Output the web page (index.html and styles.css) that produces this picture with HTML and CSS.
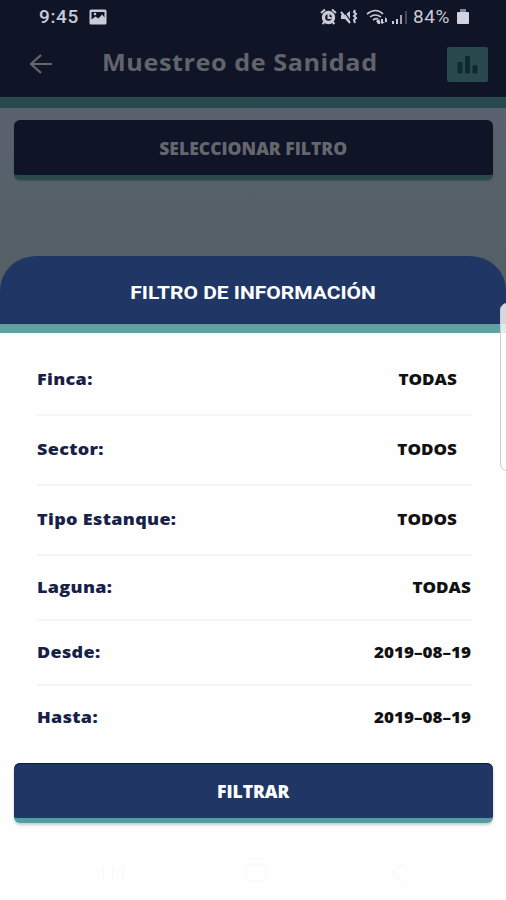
FILE: index.html
```html
<!DOCTYPE html>
<html lang="es">
<head>
<meta charset="utf-8">
<title>Muestreo de Sanidad</title>
<link rel="stylesheet" href="styles.css">
</head>
<body>
<div class="screen">
  <header class="top">
    <div class="status">
      <span class="clock">9:45</span>
      <svg class="picture" width="18" height="16" viewBox="0 0 18 16"><path fill="#c9cbd6" fill-rule="evenodd" d="M2 .5h14q1.500 0 1.500 1.500v12q0 1.500-1.500 1.500H2Q.5 15.500.5 14V2Q.5.5 2 .5zM2.500 3v7.500l4-3 3 2 3.500-4 2.500 3V3z"/><circle cx="6" cy="5" r="1.300" fill="#c9cbd6"/></svg>
      <div class="signals">
        <svg width="88" height="18" viewBox="0 0 88 18" fill="none" stroke="#c9cbd6">
          <circle cx="8.500" cy="9.500" r="5" stroke-width="3.400"/><path stroke-width="2" d="M8.500 6v4h3M1 5l4-3.500M16 5l-4-3.500M2.500 16l2-2M14.500 16l-2-2"/>
          <path fill="#c9cbd6" stroke="none" d="M21 7h4l5-4v12l-5-4h-4z"/><path stroke="#101427" stroke-width="1.300" d="M23 2l9 13"/><path stroke-width="2" d="M21 4l9 11M35 2l-1 2 2 2-2 2 2 2-2 2 1 3"/>
          <path stroke-width="1.600" d="M47 6q9-7 16 0M50 9q5-4 11 0M53 12q3-2 5-1"/><path fill="#c9cbd6" stroke="none" d="M56 13l3-2 1 2v3h-2zM61 11h2v3h2l-3 2-2-2h1zM65 9l2 2v3h-2z"/>
          <path stroke-width="2" d="M73 13v3M77 11v5"/><path stroke="#a1a4b0" stroke-width="2" d="M81 7v9"/><path stroke="#454a5d" stroke-width="2" d="M86 3v13"/>
        </svg>
        <span class="percent">84%</span>
        <svg width="12" height="15" viewBox="0 0 12 15"><path fill="#81858f" d="M3 0h6v4H3z"/><path fill="#d2d3de" d="M1 3h10q1 0 1 1v10q0 1-1 1H1q-1 0-1-1V4q0-1 1-1z"/></svg>
      </div>
    </div>
    <div class="appbar">
      <svg class="back" width="23" height="20" viewBox="0 0 23 20"><path fill="none" stroke="#65676f" stroke-width="2.200" d="M12 1L2 10l10 9M2 10h21"/></svg>
      <h1 class="title">Muestreo de Sanidad</h1>
      <div class="chart"><svg width="21" height="19" viewBox="0 0 21 19"><path fill="#10292f" d="M1.500 7h3l1 1v9.500l-1 1h-3l-1-1V8zM9 1h3l1 1v15.500l-1 1H9l-1-1V2zM16.500 10h3l1 1v6.500l-1 1h-3l-1-1V11z"/></svg></div>
    </div>
  </header>
  <div class="button dim"><span>SELECCIONAR FILTRO</span></div>
  <main class="sheet">
    <h2 class="sheet-head"><span>FILTRO DE INFORMACIÓN</span></h2>
    <div class="rows">
      <div class="row picker"><span class="label">Finca:</span><span class="value">TODAS</span></div>
      <div class="row picker"><span class="label">Sector:</span><span class="value">TODOS</span></div>
      <div class="row picker"><span class="label">Tipo Estanque:</span><span class="value">TODOS</span></div>
      <div class="row"><span class="label">Laguna:</span><span class="value">TODAS</span></div>
      <div class="row"><span class="label">Desde:</span><span class="value">2019–08–19</span></div>
      <div class="row"><span class="label">Hasta:</span><span class="value">2019–08–19</span></div>
    </div>
    <div class="button"><span>FILTRAR</span></div>
    <nav class="nav">
      <svg width="506" height="30" viewBox="0 0 506 30" fill="none" stroke="#fafafa" stroke-width="2"><path d="M103 9v14M113 9v14M123 9v14"/><rect x="246" y="7" width="20" height="17" rx="5"/><path d="M402 8l-10 8 10 8"/></svg>
    </nav>
  </main>
  <div class="edge"></div>
</div>
</body>
</html>
```
FILE: styles.css
```css
* { box-sizing: border-box; }
body { margin: 0; }
.screen {
  position: relative;
  width: 506px;
  height: 900px;
  overflow: hidden;
  display: flex;
  flex-direction: column;
  background: linear-gradient(#5b6170 108px, #56616a 180px, #555f66 256px);
  font-family: "Open Sans", sans-serif;
  font-weight: 800;
  white-space: nowrap;
}
.top { height: 108px; flex: none; background: #101427; border-bottom: 11px solid #28494d; }
.status { height: 33px; display: flex; align-items: center; padding: 0 37px 0 39px; color: #c9cbd6; }
.clock, .percent { font: 500 19px/32px Roboto, sans-serif; letter-spacing: .6px; }
.clock { width: 50px; }
.percent { font-weight: 400; letter-spacing: .6px; }
.signals { margin-left: auto; display: flex; align-items: center; gap: 5px; }
.signals .percent { width: 39px; }
.appbar { height: 62px; display: flex; align-items: center; padding: 0 18px 0 29px; }
.title { margin: -2px 0 0 50px; font-size: 22.5px; line-height: 32px; font-weight: 700; letter-spacing: .5px; color: #62646c; transform: scaleX(1.12); transform-origin: left; }
.chart { width: 41px; height: 35px; margin-left: auto; border-radius: 2px; background: #28494d; display: flex; align-items: center; justify-content: center; }
.button {
  height: 60px;
  flex: none;
  margin: 0 13px 0 14px;
  padding-top: 2px;
  display: flex;
  align-items: center;
  justify-content: center;
  border-radius: 6px;
  background: #203765;
  border-bottom: 5px solid #559ba0;
  box-shadow: 0 2px 3px #0003, inset 0 1px 1px #0b1d4a;
  color: #fff;
  font-size: 17px;
}
.button span { transform: scaleX(1.03); }
.button.dim { margin-top: 12px; background: #101427; border-color: #28494d; color: #65676f; box-shadow: 0 1px 2px #0003; }
.sheet { margin-top: 76px; flex: 1; display: flex; flex-direction: column; background: linear-gradient(transparent 60px, #fefefe 60px); }
.sheet-head {
  margin: 0;
  height: 77px;
  flex: none;
  display: flex;
  align-items: center;
  justify-content: center;
  padding-top: 5px;
  border-radius: 36px 36px 0 0 / 34px 34px 0 0;
  background: linear-gradient(#203765 67px, #162d58 68px, #60a2a2 68px);
  color: #fff;
  font: 700 19px/24px Roboto, sans-serif;
}
.sheet-head span { margin-top: -9px; transform: scaleX(1.105); }
.rows { height: 430px; flex: none; padding: 13px 34px 0 37px; }
.row { height: 65px; padding-bottom: 1px; display: flex; align-items: center; justify-content: space-between; border-bottom: 2px solid #f5f5f5; font-size: 17px; line-height: 24px; }
.row:last-child { border: 0; height: 63px; }
.picker { height: 70px; }
.label { color: #172148; font-size: 16.5px; letter-spacing: .3px; margin-top: -1px; transform: scaleX(1.09); transform-origin: left; }
.value { color: #111; font-size: 16px; margin: -1px 1px 0 0; transform: scaleX(1.065); transform-origin: right; }
.picker .value { margin-right: 15px; }
.nav { margin-top: 34px; }
.nav svg { display: block; }
.edge {
  position: absolute;
  left: 500px;
  top: 303px;
  width: 16px;
  height: 168px;
  border: 1px solid #ccc;
  border-radius: 7px;
  background: #ffffffcc;
}
```
